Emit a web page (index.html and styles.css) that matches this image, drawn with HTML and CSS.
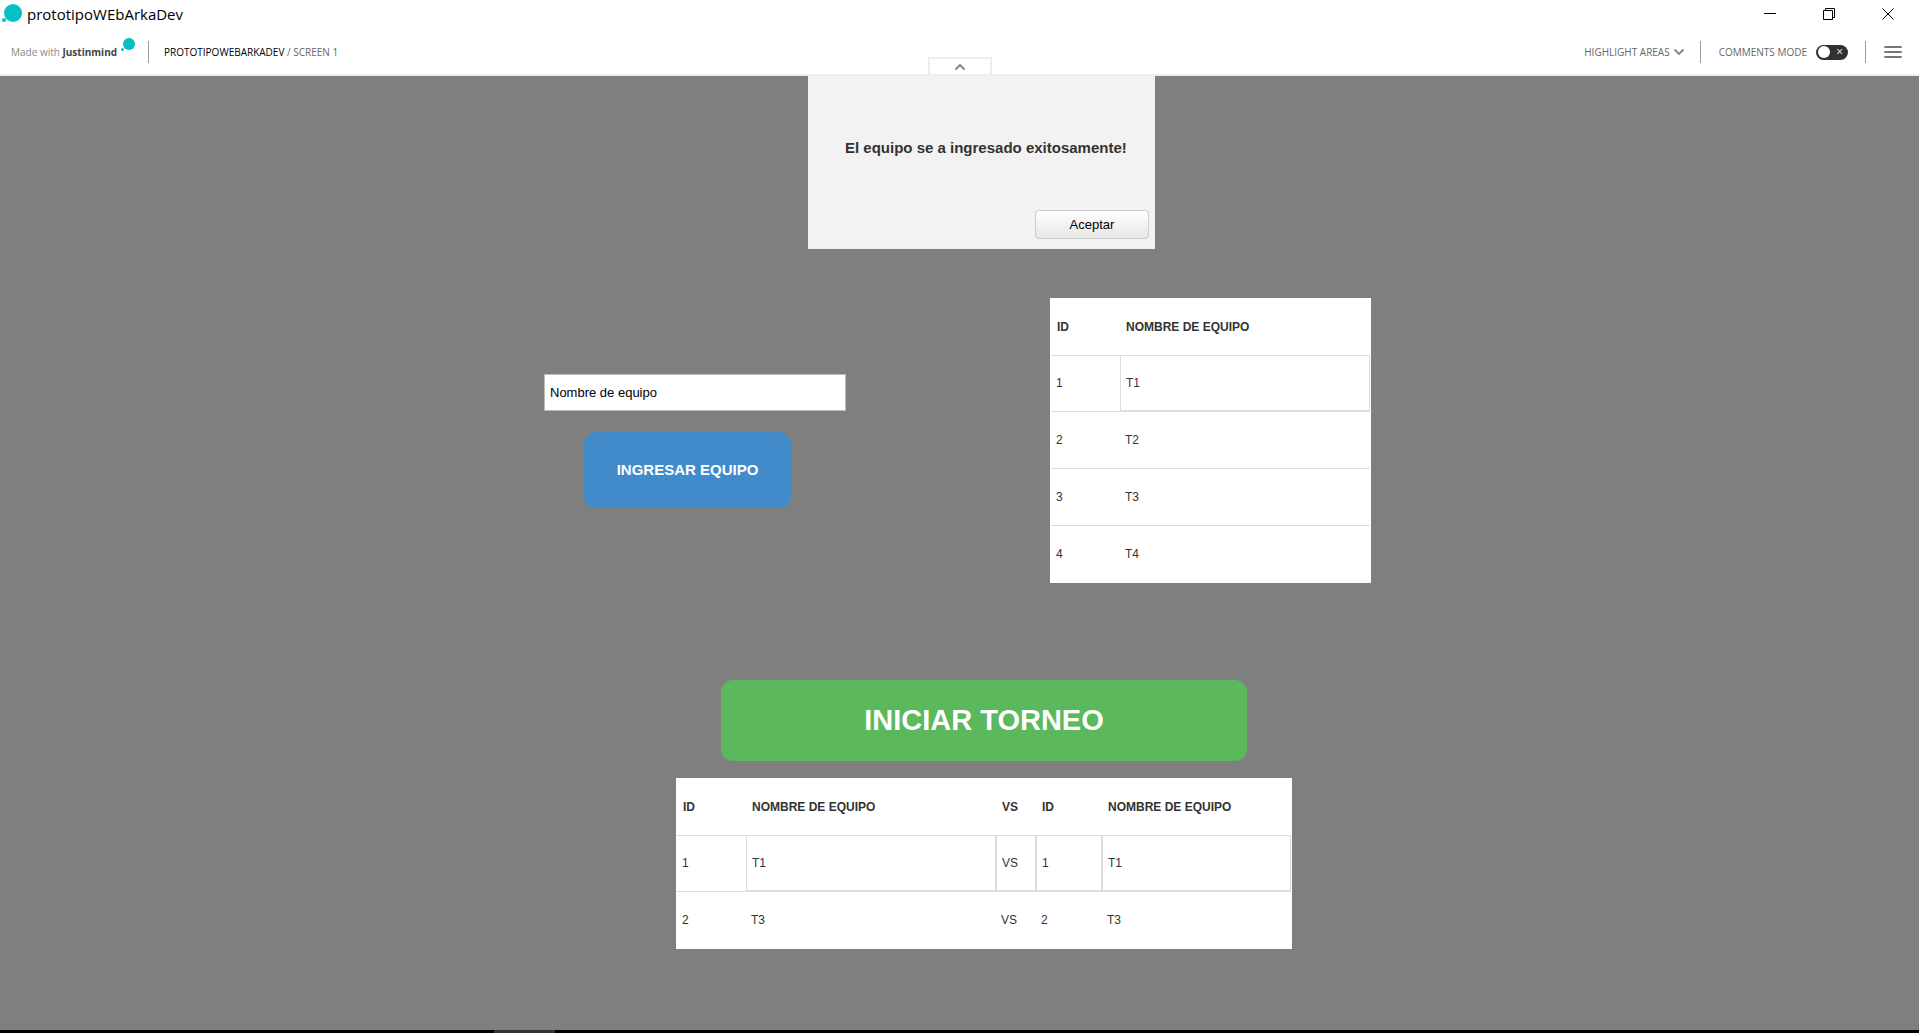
FILE: index.html
```html
<!DOCTYPE html>
<html lang="es">
<head>
<meta charset="utf-8">
<meta name="viewport" content="width=device-width, initial-scale=1">
<title>prototipoWEbArkaDev</title>
<link rel="stylesheet" href="styles.css">
</head>
<body>
<header class="titlebar">
  <svg class="app-icon" width="20" height="20" viewBox="0 0 20 20" aria-hidden="true"><circle cx="11" cy="9" r="9" fill="#06c0c4"/><circle cx="2" cy="16" r="2" fill="#06c0c4"/></svg>
  <span class="window-title">prototipoWEbArkaDev</span>
  <div class="window-controls">
    <button type="button" aria-label="Minimizar"><svg width="14" height="14" viewBox="0 0 14 14"><path d="M1 6.500H13" stroke="#000" fill="none"/></svg></button>
    <button type="button" aria-label="Restaurar"><svg width="14" height="14" viewBox="0 0 14 14"><path d="M1.500 3.500H10.500V12.500H1.500ZM3.500 3.500V1.500H12.500V10.500H10.500" stroke="#000" fill="none"/></svg></button>
    <button type="button" aria-label="Cerrar"><svg width="14" height="14" viewBox="0 0 14 14"><path d="M1.500 1.500L12.500 12.500M12.500 1.500L1.500 12.500" stroke="#000" fill="none"/></svg></button>
  </div>
</header>

<nav class="toolbar">
  <a class="brand" href="#">Made with <b>Justinmind</b></a>
  <svg class="brand-mark" width="14" height="14" viewBox="0 0 14 14" aria-hidden="true"><circle cx="8" cy="6" r="6" fill="#06c0c4"/><circle cx="1.500" cy="11.500" r="1.500" fill="#06c0c4"/></svg>
  <span class="divider"></span>
  <div class="crumbs"><a href="#">PROTOTIPOWEBARKADEV</a> / SCREEN 1</div>
  <div class="tools">
    <button class="tool highlight" type="button">HIGHLIGHT AREAS
      <svg width="12" height="8" viewBox="0 0 12 8"><path d="M1.500 1.500L6 6L10.500 1.500" stroke="#7d8286" stroke-width="1.800" fill="none"/></svg>
    </button>
    <span class="divider"></span>
    <label class="tool comments">COMMENTS MODE <input class="switch" type="checkbox" role="switch"></label>
    <span class="divider"></span>
    <button class="tool" type="button" aria-label="Menu"><svg width="18" height="14" viewBox="0 0 18 14"><path d="M1 2H17M1 7H17M1 12H17" stroke="#777" stroke-width="1.800" stroke-linecap="round" fill="none"/></svg></button>
  </div>
  <button class="collapse" type="button" aria-label="Ocultar barra"><svg width="12" height="8" viewBox="0 0 12 8"><path d="M1.500 6.500L6 2L10.500 6.500" stroke="#7d8286" stroke-width="1.800" fill="none"/></svg></button>
</nav>

<main class="stage">
  <section class="dialog" role="alertdialog" aria-labelledby="dialog-text">
    <p id="dialog-text">El equipo se a ingresado exitosamente!</p>
    <button class="accept" type="button">Aceptar</button>
  </section>

  <div class="teams">
    <form class="team-form">
      <input class="team-name" type="text" value="Nombre de equipo" aria-label="Nombre de equipo">
      <button class="add-team" type="button">INGRESAR EQUIPO</button>
    </form>
    <table class="grid">
      <colgroup><col class="col-id"><col></colgroup>
      <thead><tr><th>ID</th><th>NOMBRE DE EQUIPO</th></tr></thead>
      <tbody>
        <tr class="selected"><td>1</td><td>T1</td></tr>
        <tr><td>2</td><td>T2</td></tr>
        <tr><td>3</td><td>T3</td></tr>
        <tr><td>4</td><td>T4</td></tr>
      </tbody>
    </table>
  </div>

  <section class="matches">
    <button class="start" type="button">INICIAR TORNEO</button>
    <table class="grid">
      <colgroup><col class="col-id"><col class="col-name"><col class="col-vs"><col class="col-rival"><col></colgroup>
      <thead><tr><th>ID</th><th>NOMBRE DE EQUIPO</th><th>VS</th><th>ID</th><th>NOMBRE DE EQUIPO</th></tr></thead>
      <tbody>
        <tr class="selected"><td>1</td><td>T1</td><td>VS</td><td>1</td><td>T1</td></tr>
        <tr><td>2</td><td>T3</td><td>VS</td><td>2</td><td>T3</td></tr>
      </tbody>
    </table>
  </section>
</main>

<footer class="taskbar"><span class="task"></span></footer>
</body>
</html>
```
FILE: styles.css
```css
* { box-sizing: border-box; }

body {
  margin: 0;
  min-height: 100vh;
  display: flex;
  flex-direction: column;
  background: #7f7f7f;
  color: #333;
  font-family: Arial, "Liberation Sans", sans-serif;
}

button {
  padding: 0;
  border: 0;
  background: none;
  color: inherit;
  font: inherit;
}

svg { display: block; }
a { color: inherit; text-decoration: none; }

/* Window title bar */
.titlebar {
  display: flex;
  align-items: center;
  height: 28px;
  padding: 0 24px 0 2px;
  background: #fff;
  color: #000;
  font: 15px/20px "Segoe UI", "Open Sans", sans-serif;
}
.window-title { margin-left: 5px; }
.window-controls {
  display: flex;
  gap: 45px;
  margin-left: auto;
}

/* Viewer toolbar */
.toolbar {
  position: relative;
  display: flex;
  align-items: center;
  height: 48px;
  padding: 2px 17px 0 11px;
  background: #fff;
  border-bottom: 2px solid #eee;
  color: #666;
  font: 10px/16px "Open Sans", sans-serif;
}
.brand { color: #888; }
.brand b { color: #444; }
.brand-mark { align-self: flex-start; margin: 8px 13px 0 4px; }
.divider { width: 1px; height: 22px; background: #999; }
.crumbs { margin-left: 15px; }
.crumbs a { color: #000; }
.tools {
  display: flex;
  align-items: center;
  gap: 15px;
  margin-left: auto;
}
.tool {
  display: flex;
  align-items: center;
}
.highlight { gap: 3px; }
.comments { gap: 9px; margin: 0 2px 0 3px; }
.tools .divider + button { margin-left: 3px; }

.switch {
  appearance: none;
  display: flex;
  align-items: center;
  justify-content: space-between;
  width: 32px;
  height: 15px;
  margin: 0;
  padding: 0 5px 0 2px;
  border-radius: 8px;
  background: #2f3133;
}
.switch::before {
  content: "";
  width: 12px;
  height: 12px;
  border-radius: 50%;
  background: #fff;
}
.switch::after {
  content: "×";
  color: #eee;
  font: 12px/12px "Open Sans", sans-serif;
}

.collapse {
  position: absolute;
  left: 50%;
  bottom: 0;
  display: flex;
  align-items: center;
  justify-content: center;
  width: 64px;
  height: 17px;
  transform: translateX(-50%);
  border: 2px solid #eee;
  border-bottom: 0;
}

/* Prototype screen */
.stage {
  flex: 1;
  width: 100%;
  max-width: 831px;
  margin: 0 auto;
}

.dialog {
  display: flex;
  flex-direction: column;
  align-items: flex-end;
  justify-content: space-between;
  width: 347px;
  height: 173px;
  margin-left: 264px;
  padding: 62px 6px 10px;
  background: #f2f2f2;
}
.dialog p {
  align-self: flex-start;
  margin: 0 0 0 31px;
  font-size: 15px;
  line-height: 20px;
  font-weight: bold;
}
.accept {
  width: 114px;
  height: 29px;
  border: 1px solid #ccc;
  border-radius: 4px;
  background: linear-gradient(#fff, #e6e6e6);
  color: #000;
  font-size: 13px;
}

.teams {
  display: grid;
  grid-template-columns: 302px 321px;
  justify-content: space-between;
  align-items: start;
  margin-top: 49px;
  padding-right: 4px;
}
.team-form {
  display: grid;
  gap: 21px;
  padding-top: 76px;
}
.team-name {
  height: 37px;
  padding: 0 5px;
  border: 1px solid #bbb;
  color: #000;
  font: 13px Arial, "Liberation Sans", sans-serif;
}
.add-team {
  width: 207px;
  height: 76px;
  margin-left: 40px;
  padding-bottom: 2px;
  border-radius: 12px;
  background: #428bca;
  color: #fff;
  font-size: 15px;
  font-weight: bold;
}

.matches {
  display: grid;
  gap: 17px;
  width: 616px;
  margin: 97px 0 0 132px;
}
.start {
  height: 81px;
  margin: 0 45px;
  border-radius: 12px;
  background: #5cb85c;
  color: #fff;
  font-size: 29px;
  font-weight: bold;
}

/* Data tables */
.grid {
  width: 100%;
  table-layout: fixed;
  border: 1px solid #fff;
  border-spacing: 0;
  background: #fff;
  font-size: 12px;
  line-height: 16px;
  text-align: left;
}
.col-id { width: 69px; }
.col-name { width: 250px; }
.col-vs { width: 40px; }
.col-rival { width: 66px; }
.grid th, .grid td { height: 57px; padding: 0 5px; }
.grid th { height: 56px; padding: 0 6px; }
.grid td { border-top: 1px solid #ddd; }
.grid .selected td {
  height: 56px;
  border: 1px solid #ddd;
}
.grid .selected td:first-child {
  border-width: 1px 0;
  border-bottom-color: #fff;
}

/* Top edge of the system taskbar */
.taskbar {
  height: 3px;
  padding-left: 494px;
  background: #000;
}
.task {
  display: block;
  width: 61px;
  height: 3px;
  background: #333;
}
```
